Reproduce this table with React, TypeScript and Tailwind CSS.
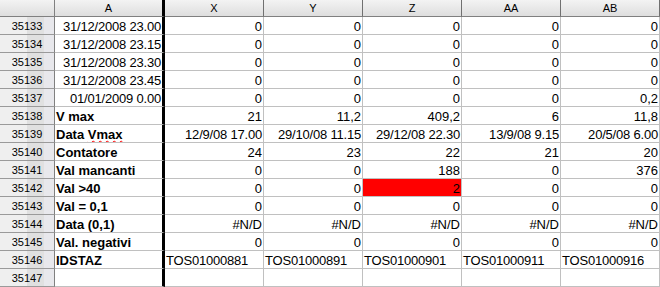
import React from "react";

type Row = {
  n: number;
  a: string;
  bold?: boolean;
  squiggle?: boolean;
  vals: string[];
  left?: boolean;
  red?: number;
};

const COLS = ["X", "Y", "Z", "AA", "AB"];

const ROWS: Row[] = [
  { n: 35133, a: "31/12/2008 23.00", vals: ["0", "0", "0", "0", "0"] },
  { n: 35134, a: "31/12/2008 23.15", vals: ["0", "0", "0", "0", "0"] },
  { n: 35135, a: "31/12/2008 23.30", vals: ["0", "0", "0", "0", "0"] },
  { n: 35136, a: "31/12/2008 23.45", vals: ["0", "0", "0", "0", "0"] },
  { n: 35137, a: "01/01/2009 0.00", vals: ["0", "0", "0", "0", "0,2"] },
  { n: 35138, a: "V max", bold: true, vals: ["21", "11,2", "409,2", "6", "11,8"] },
  {
    n: 35139,
    a: "Data Vmax",
    bold: true,
    squiggle: true,
    vals: ["12/9/08 17.00", "29/10/08 11.15", "29/12/08 22.30", "13/9/08 9.15", "20/5/08 6.00"],
  },
  { n: 35140, a: "Contatore", bold: true, vals: ["24", "23", "22", "21", "20"] },
  { n: 35141, a: "Val mancanti", bold: true, vals: ["0", "0", "188", "0", "376"] },
  { n: 35142, a: "Val >40", bold: true, vals: ["0", "0", "2", "0", "0"], red: 2 },
  { n: 35143, a: "Val = 0,1", bold: true, vals: ["0", "0", "0", "0", "0"] },
  { n: 35144, a: "Data (0,1)", bold: true, vals: ["#N/D", "#N/D", "#N/D", "#N/D", "#N/D"] },
  { n: 35145, a: "Val. negativi", bold: true, vals: ["0", "0", "0", "0", "0"] },
  {
    n: 35146,
    a: "IDSTAZ",
    bold: true,
    left: true,
    vals: ["TOS01000881", "TOS01000891", "TOS01000901", "TOS01000911", "TOS01000916"],
  },
  { n: 35147, a: "", vals: ["", "", "", "", ""] },
];

const font = "font-['Liberation_Sans',Arial,sans-serif]";
const colHead =
  "bg-[linear-gradient(to_bottom,#f3f3f3,#dedede)] border-b border-b-[#808080] text-[11px] leading-[15px] pt-[1px] text-center text-black";
const rowHead =
  "bg-[linear-gradient(to_right,#efefef_0%,#efefef_50%,#e0e0e0_50%,#e0e0e0_82%,#e8e8ec_82%)] border-r border-b border-r-[#808080] border-b-[#9a9a9a] text-[11px] leading-[17px] pt-[1px] text-center text-black";
const cell =
  "border-r border-b border-[#c0c0c0] overflow-hidden whitespace-nowrap text-[13px] leading-[17px] pt-[1px] px-[1px] text-black";

export default function App() {
  return (
    <div
      className={`${font} w-[660px] h-[287px] overflow-hidden bg-white grid grid-cols-[55px_110px_99px_99px_99px_99px_99px] grid-rows-[17px_repeat(15,18px)]`}
    >
      {/* column header row */}
      <div className={`${colHead} border-r border-r-[#808080]`} />
      <div className={`${colHead} border-r-[3px] border-r-black`}>A</div>
      {COLS.map((c) => (
        <div key={c} className={`${colHead} border-r border-r-[#707070]`}>
          {c}
        </div>
      ))}

      {ROWS.map((r) => (
        <React.Fragment key={r.n}>
          <div className={rowHead}>{r.n}</div>
          <div
            className={`border-b border-b-[#c0c0c0] border-r-[3px] border-r-black overflow-hidden whitespace-nowrap text-[13px] leading-[17px] pt-[1px] px-[1px] text-black ${
              r.bold ? "font-bold text-left" : "text-right tracking-[-0.2px]"
            }`}
          >
            {r.squiggle ? (
              <>
                Data{" "}
                <span className="underline decoration-wavy decoration-[#ff0000] decoration-1 underline-offset-[1px]">
                  Vmax
                </span>
              </>
            ) : (
              r.a
            )}
          </div>
          {r.vals.map((v, i) => (
            <div
              key={i}
              className={`${cell} ${r.left ? "text-left" : "text-right"} ${
                r.red === i ? "bg-[#ff0000]" : ""
              } ${r.vals[i].length > 6 ? "tracking-[-0.2px]" : ""}`}
            >
              {v}
            </div>
          ))}
        </React.Fragment>
      ))}
    </div>
  );
}
